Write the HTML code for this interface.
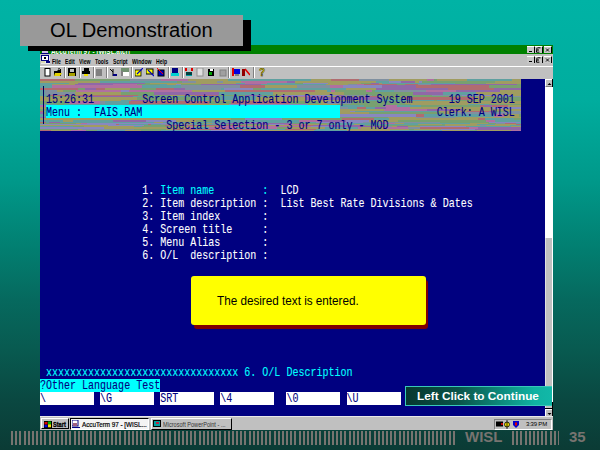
<!DOCTYPE html>
<html><head><meta charset="utf-8">
<style>
*{margin:0;padding:0;box-sizing:border-box}
html,body{width:600px;height:450px;overflow:hidden}
body{position:relative;font-family:"Liberation Sans",sans-serif;
background:linear-gradient(to bottom,#00b3a5 0px,#00ad9e 100px,#00998a 180px,#027e70 250px,#06695e 300px,#085a50 350px,#0a4841 400px,#0b3b35 450px);}
.abs{position:absolute}
.sbtn{width:7px;height:8px;background:#c0c0c0;border-top:1px solid #fff;border-left:1px solid #fff;border-bottom:1px solid #808080}
.tbt{font-size:7px;line-height:10px;color:#000;white-space:nowrap;transform-origin:0 0}

.btn{width:8px;height:7px;background:#c8c8c8;border-top:1px solid #fff;border-right:1px solid #000}
.btn i{position:absolute;background:#000;display:block}
.btn b{position:absolute;left:0;top:-3px;width:7px;font-size:8px;line-height:10px;text-align:center;color:#000}
.menu{top:11.5px;font-size:6.8px;line-height:10px;color:#000;white-space:nowrap;transform:scaleX(0.75);transform-origin:0 0;font-weight:bold}
.sep{position:absolute;top:0;width:2px;height:11px;border-left:1px solid #808080;border-right:1px solid #fff}
.ic{position:absolute;top:1px;width:8px;height:9px}

#tshadow{left:28px;top:20px;width:223px;height:31px;background:#000}
#tbox{left:20px;top:15px;width:223px;height:31px;background:#999999}
#ttext{left:50px;top:18px;font-size:20.15px;color:#000;white-space:nowrap;line-height:24px}
#win{left:40px;top:45px;width:513px;height:385px;background:#c0c0c0;overflow:hidden}
#titlebar{left:0;top:0;width:513px;height:9px;background:#008000}
#term{left:0;top:34px;width:505px;height:337px;background:#000080}
.row{position:absolute;left:0;height:13px;white-space:pre;font-family:"Liberation Mono",monospace;font-size:13.5px;line-height:13px;transform:scaleX(0.7418);-webkit-text-stroke:0.1px currentColor;transform-origin:0 0}
.cy{color:#00ffff}.wh{color:#fff}.nv{color:#000080}
#taskbar{left:0;top:371px;width:513px;height:14px;background:#c0c0c0;border-top:1px solid #e8e8e8}
#bars1{left:10.8px;top:431px;width:444px;height:14px;background:repeating-linear-gradient(to right,#777470 0,#777470 2.1px,transparent 2.1px,transparent 4.1667px)}
#bars2{left:512px;top:431px;width:47px;height:14px;background:repeating-linear-gradient(to right,#777470 0,#777470 2.1px,transparent 2.1px,transparent 4.1667px)}
#wisl{left:465px;top:428px;font-size:15px;font-weight:bold;color:#777470;line-height:18px}
#pgno{left:569px;top:428px;font-size:15px;font-weight:bold;color:#777470;line-height:18px}
#ysh{left:194px;top:280px;width:234px;height:49px;background:#800000;border-radius:3px}
#ybox{left:191px;top:276px;width:235px;height:49px;background:#ffff00;border-radius:3px}
#ytext{left:217px;top:294px;font-size:12px;color:#000;line-height:14px;white-space:nowrap;transform:scaleX(0.975);transform-origin:0 0}
#lcc{left:404.5px;top:385.5px;width:147px;height:20.5px;background:linear-gradient(to right,#06382f 0%,#0a5248 35%,#0d8a7c 65%,#10b2a2 88%,#12b8a8 100%);border:1px solid #38c8b8;border-right:none}
#lcctext{left:417px;top:389px;font-size:11.8px;font-weight:bold;color:#fff;line-height:15px;white-space:nowrap}
</style></head><body>
<div id="win" class="abs">
  <div id="titlebar" class="abs" style="overflow:hidden"><div class="abs" id="ttl" style="left:10.5px;top:1.5px;font-size:8px;font-weight:bold;color:#fff;line-height:10px;white-space:nowrap;transform:scaleX(0.8);transform-origin:0 0">AccuTerm 97 - [WISL.atcf]</div></div>
  
  <div class="abs" style="left:1px;top:7.5px;width:8px;height:1px;background:#000080"></div><div class="abs" style="left:2px;top:6px;width:6px;height:1.5px;background:#d0c0e0"></div>
  <div class="abs btn" style="left:486.5px;top:1px"><i style="left:2px;top:4px;width:3px;height:1px"></i></div>
  <div class="abs btn" style="left:494.5px;top:1px"><svg width="7" height="6" viewBox="0 0 7 6" style="position:absolute;left:0;top:0"><path d="M2.5 0.8 h3 M2 0.8 l-0.6 4.4 h3 M2 3 h2" stroke="#000" stroke-width="1" fill="none"/></svg></div>
  <div class="abs btn" style="left:503.5px;top:1px"><svg width="7" height="6" viewBox="0 0 7 6" style="position:absolute;left:0;top:0"><path d="M2 1.5 l3 3 M5 1.5 l-3 3" stroke="#000" stroke-width="0.9"/></svg></div>
  <svg class="abs" style="left:1px;top:10px" width="9" height="9" viewBox="0 0 9 9"><rect x="0" y="0" width="9" height="9" fill="#e8e8e8"/><rect x="0.5" y="0.5" width="7" height="5" fill="#fff" stroke="#000080" stroke-width="1"/><rect x="3" y="2" width="2" height="2" fill="#000"/><rect x="0" y="6" width="4" height="2" fill="#d8d8b0"/><rect x="5" y="6" width="4" height="2" fill="#000080"/></svg>
  <div class="abs menu" style="left:12px">File</div>
  <div class="abs menu" style="left:25px">Edit</div>
  <div class="abs menu" style="left:39px">View</div>
  <div class="abs menu" style="left:55px">Tools</div>
  <div class="abs menu" style="left:73px">Script</div>
  <div class="abs menu" style="left:92px">Window</div>
  <div class="abs menu" style="left:116px">Help</div>
  <div class="abs btn" style="left:486.5px;top:11px"><i style="left:2px;top:4px;width:3px;height:1px"></i></div>
  <div class="abs btn" style="left:494.5px;top:11px"><svg width="7" height="6" viewBox="0 0 7 6" style="position:absolute;left:0;top:0"><path d="M2.5 0.8 h3 M2 0.8 l-0.6 4.4 h3 M2 3 h2" stroke="#000" stroke-width="1" fill="none"/></svg></div>
  <div class="abs btn" style="left:503.5px;top:11px"><svg width="7" height="6" viewBox="0 0 7 6" style="position:absolute;left:0;top:0"><path d="M2 1.5 l3 3 M5 1.5 l-3 3" stroke="#000" stroke-width="0.9"/></svg></div>
  <div class="abs" style="left:0;top:21px;width:513px;height:1px;background:#fff"></div>
  <div id="tools" class="abs" style="left:0;top:22px;width:513px;height:11px"><div class="sep" style="left:24.0px"></div><div class="sep" style="left:38.5px"></div><div class="sep" style="left:52.5px"></div><div class="sep" style="left:65.5px"></div><div class="sep" style="left:91.0px"></div><div class="sep" style="left:128.0px"></div><div class="sep" style="left:141.5px"></div><div class="sep" style="left:188.0px"></div><div class="sep" style="left:213.0px"></div><svg class="ic" style="left:3.5px" width="8" height="9" viewBox="0 0 8 9"><rect x="1" y="0.5" width="5" height="7.5" fill="#fff" stroke="#000" stroke-width="1"/></svg><svg class="ic" style="left:14.0px" width="8" height="9" viewBox="0 0 8 9"><path d="M0 3 h3 l1 -1 h3 v6 h-7z" fill="#000"/><path d="M1 5 h7 l-2 3 h-6z" fill="#e0d000"/><path d="M4 1 q2 -1 3 1" stroke="#000" fill="none"/></svg><svg class="ic" style="left:27.5px" width="8" height="9" viewBox="0 0 8 9"><rect x="0" y="0" width="8" height="8" fill="#000"/><rect x="2" y="1" width="4" height="3" fill="#c0c0c0"/><rect x="1" y="5" width="6" height="3" fill="#a8a000"/></svg><svg class="ic" style="left:42.0px" width="8" height="9" viewBox="0 0 8 9"><rect x="2" y="0" width="5" height="3" fill="#000"/><rect x="0" y="3" width="8" height="3" fill="#000"/><rect x="2" y="6" width="4" height="2" fill="#f0e000"/></svg><svg class="ic" style="left:55.0px" width="8" height="9" viewBox="0 0 8 9"><rect x="1" y="1" width="6" height="7" fill="#808080"/></svg><svg class="ic" style="left:70.0px" width="8" height="9" viewBox="0 0 8 9"><path d="M0 1 l3 3 M3 1 l0 7" stroke="#000"/><rect x="3" y="6" width="4" height="2" fill="#000080"/></svg><svg class="ic" style="left:81.0px" width="8" height="9" viewBox="0 0 8 9"><rect x="0" y="0" width="8" height="4" fill="#709070"/><rect x="2" y="4" width="6" height="4" fill="#fff"/><rect x="0" y="3" width="2" height="5" fill="#808080"/></svg><svg class="ic" style="left:95.0px" width="8" height="9" viewBox="0 0 8 9"><rect x="0" y="2" width="6" height="6" fill="#ffff00" stroke="#000" stroke-width="0.8"/><path d="M2 6 L8 0" stroke="#0000c0" stroke-width="1.2"/></svg><svg class="ic" style="left:106.0px" width="8" height="9" viewBox="0 0 8 9"><rect x="0" y="1" width="7" height="5" fill="#ffff00" stroke="#000" stroke-width="1"/><path d="M2 2 L8 8" stroke="#0000c0" stroke-width="1.2"/></svg><svg class="ic" style="left:117.0px" width="8" height="9" viewBox="0 0 8 9"><rect x="1" y="2" width="6" height="6" fill="#0000c0" stroke="#000"/><path d="M0 0 L6 6" stroke="#f00" stroke-width="1"/></svg><svg class="ic" style="left:131.0px" width="8" height="9" viewBox="0 0 8 9"><rect x="1" y="0" width="6" height="5" fill="#000080"/><rect x="0" y="5" width="8" height="3" fill="#00d0d0"/></svg><svg class="ic" style="left:145.0px" width="8" height="9" viewBox="0 0 8 9"><rect x="0" y="0" width="2" height="3" fill="#e00000"/><rect x="6" y="0" width="2" height="3" fill="#e00000"/><rect x="1" y="4" width="6" height="3" fill="#004040"/><rect x="1" y="7" width="6" height="1" fill="#00a0a0"/></svg><svg class="ic" style="left:156.0px" width="8" height="9" viewBox="0 0 8 9"><rect x="1" y="0" width="6" height="8" fill="#e0e0e0" stroke="#909090"/></svg><svg class="ic" style="left:167.0px" width="8" height="9" viewBox="0 0 8 9"><rect x="1" y="1" width="6" height="7" fill="#000"/><rect x="2" y="4" width="3" height="3" fill="#00a000"/><rect x="3" y="1" width="3" height="2" fill="#fff"/></svg><svg class="ic" style="left:179.0px" width="8" height="9" viewBox="0 0 8 9"><rect x="1" y="2" width="6" height="6" fill="#a0a0a0" stroke="#808080"/></svg><svg class="ic" style="left:192.0px" width="8" height="9" viewBox="0 0 8 9"><rect x="0" y="0" width="2" height="8" fill="#e00000"/><rect x="2" y="1" width="6" height="5" fill="#0000e0"/><rect x="3" y="6" width="4" height="2" fill="#808080"/></svg><svg class="ic" style="left:202.0px" width="8" height="9" viewBox="0 0 8 9"><rect x="0" y="1" width="3" height="7" fill="#900000"/><path d="M3 1 L8 7" stroke="#e00000" stroke-width="1.5"/></svg><svg class="ic" style="left:218.0px" width="8" height="9" viewBox="0 0 8 9"><text x="1" y="8" font-size="10" font-weight="bold" fill="#e8d800" stroke="#000" stroke-width="0.4" font-family="Liberation Sans">?</text></svg></div>
  <div id="term" class="abs"></div>
  <svg id="noise" class="abs" width="481" height="52" viewBox="0 0 481 52" shape-rendering="crispEdges" style="left:0;top:34px"><path fill="#b06c70" d="M0 0h35v2h-35zM291 0h28v2h-28zM324 5h33v1h-33zM365 5h13v1h-13zM200 6h16v3h-16zM216 6h9v3h-9zM376 6h32v3h-32zM408 6h41v3h-41zM0 9h38v2h-38zM56 9h9v2h-9zM116 9h18v2h-18zM408 9h46v2h-46zM185 11h90v2h-90zM8 16h90v1h-90zM155 16h23v1h-23zM102 17h5v1h-5zM327 17h12v1h-12zM364 18h71v3h-71zM89 22h80v3h-80zM191 22h59v3h-59zM440 26h4v2h-4zM452 26h16v2h-16zM317 28h9v2h-9zM41 30h62v2h-62zM258 30h6v2h-6zM0 32h4v1h-4zM427 32h22v1h-22zM41 33h8v2h-8zM49 33h86v2h-86zM376 35h8v3h-8zM302 39h12v2h-12zM314 39h20v2h-20zM438 39h7v2h-7zM0 43h6v1h-6zM465 44h11v1h-11zM76 45h3v1h-3zM108 45h3v1h-3zM476 45h5v1h-5zM125 46h68v1h-68zM193 46h12v1h-12zM261 46h12v1h-12zM380 48h49v2h-49zM134 50h72v1h-72zM206 50h11v1h-11zM245 50h31v1h-31zM0 51h11v1h-11z"/><path fill="#78a070" d="M35 0h43v2h-43zM78 0h12v2h-12zM394 0h3v2h-3zM137 2h5v2h-5zM382 2h73v2h-73zM105 4h5v1h-5zM255 4h8v1h-8zM321 4h10v1h-10zM415 4h31v1h-31zM97 5h23v1h-23zM141 5h4v1h-4zM145 5h16v1h-16zM357 5h8v1h-8zM477 5h4v1h-4zM449 6h32v3h-32zM38 9h7v2h-7zM90 9h10v2h-10zM100 9h16v2h-16zM213 9h8v2h-8zM23 11h4v2h-4zM27 11h9v2h-9zM295 11h10v2h-10zM305 11h21v2h-21zM332 11h3v2h-3zM81 13h33v3h-33zM304 13h69v3h-69zM98 16h32v1h-32zM178 16h27v1h-27zM222 16h19v1h-19zM332 16h60v1h-60zM3 17h37v1h-37zM370 17h15v1h-15zM385 17h14v1h-14zM399 17h5v1h-5zM404 17h34v1h-34zM97 18h82v3h-82zM342 18h22v3h-22zM445 18h36v3h-36zM394 21h3v1h-3zM420 21h33v1h-33zM453 21h28v1h-28zM0 22h18v3h-18zM18 22h11v3h-11zM169 22h22v3h-22zM250 22h23v3h-23zM273 22h8v3h-8zM311 22h3v3h-3zM314 22h51v3h-51zM17 25h7v1h-7zM297 25h70v1h-70zM367 25h4v1h-4zM449 25h32v1h-32zM70 26h4v2h-4zM92 26h31v2h-31zM324 26h21v2h-21zM381 26h59v2h-59zM124 28h10v2h-10zM0 30h32v2h-32zM124 30h75v2h-75zM453 32h17v1h-17zM3 33h10v2h-10zM216 33h33v2h-33zM264 33h26v2h-26zM329 33h75v2h-75zM66 35h53v3h-53zM119 35h4v3h-4zM479 35h2v3h-2zM104 38h9v1h-9zM179 38h22v1h-22zM295 38h53v1h-53zM191 39h14v2h-14zM242 39h60v2h-60zM474 39h7v2h-7zM156 41h16v2h-16zM358 41h72v2h-72zM430 41h16v2h-16zM400 43h40v1h-40zM440 43h9v1h-9zM0 44h36v1h-36zM156 44h8v1h-8zM252 44h38v1h-38zM290 44h6v1h-6zM448 44h8v1h-8zM186 45h34v1h-34zM402 45h3v1h-3zM104 46h21v1h-21zM325 46h80v1h-80zM33 47h11v1h-11zM102 47h43v1h-43zM237 48h3v2h-3zM240 48h12v2h-12zM0 50h38v1h-38zM94 50h32v1h-32zM369 50h5v1h-5zM46 51h11v1h-11zM101 51h20v1h-20zM430 51h7v1h-7z"/><path fill="#8090a0" d="M90 0h31v2h-31zM319 0h30v2h-30zM142 2h14v2h-14zM177 2h6v2h-6zM308 5h9v1h-9zM378 5h13v1h-13zM141 6h59v3h-59zM257 6h33v3h-33zM145 9h36v2h-36zM5 11h12v2h-12zM354 11h32v2h-32zM5 13h30v3h-30zM304 16h28v1h-28zM392 16h3v1h-3zM395 16h21v1h-21zM416 16h6v1h-6zM458 17h23v1h-23zM139 21h15v1h-15zM60 22h5v3h-5zM287 22h24v3h-24zM295 28h13v2h-13zM470 32h10v1h-10zM13 33h28v2h-28zM140 33h76v2h-76zM411 33h70v2h-70zM113 38h43v1h-43zM376 38h39v1h-39zM323 43h77v1h-77zM172 44h10v1h-10zM456 44h9v1h-9zM121 45h32v1h-32zM440 46h6v1h-6zM346 47h6v1h-6zM368 48h12v2h-12zM42 50h52v1h-52z"/><path fill="#b070a0" d="M121 0h27v2h-27zM387 0h7v2h-7zM201 2h46v2h-46zM205 4h22v1h-22zM73 5h24v1h-24zM317 5h7v1h-7zM12 6h90v3h-90zM290 6h13v3h-13zM36 11h45v2h-45zM89 11h63v2h-63zM291 11h4v2h-4zM326 11h6v2h-6zM386 11h30v2h-30zM235 17h51v1h-51zM29 22h31v3h-31zM0 26h70v2h-70zM345 26h12v2h-12zM228 28h34v2h-34zM346 28h24v2h-24zM344 30h15v2h-15zM359 30h28v2h-28zM102 32h8v1h-8zM454 35h10v3h-10zM259 41h19v2h-19zM446 41h9v2h-9zM41 44h6v1h-6zM339 44h16v1h-16zM244 45h24v1h-24zM180 47h46v1h-46zM226 47h45v1h-45zM147 48h7v2h-7zM169 48h27v2h-27zM215 48h22v2h-22zM318 48h3v2h-3zM344 48h24v2h-24zM429 48h9v2h-9zM31 51h6v1h-6zM37 51h9v1h-9zM471 51h10v1h-10z"/><path fill="#a09c60" d="M148 0h40v2h-40zM271 0h20v2h-20zM349 0h6v2h-6zM355 0h32v2h-32zM397 0h30v2h-30zM472 0h9v2h-9zM0 2h51v2h-51zM51 2h9v2h-9zM156 2h12v2h-12zM168 2h9v2h-9zM183 2h18v2h-18zM255 2h81v2h-81zM375 2h4v2h-4zM455 2h26v2h-26zM29 4h9v1h-9zM110 4h86v1h-86zM288 4h33v1h-33zM339 4h3v1h-3zM446 4h35v1h-35zM12 5h23v1h-23zM127 5h9v1h-9zM286 5h22v1h-22zM225 6h32v3h-32zM65 9h25v2h-25zM306 9h30v2h-30zM17 11h6v2h-6zM152 11h33v2h-33zM275 11h12v2h-12zM460 11h21v2h-21zM35 13h46v3h-46zM233 13h71v3h-71zM436 13h45v3h-45zM130 16h25v1h-25zM473 16h8v1h-8zM0 17h3v1h-3zM286 17h25v1h-25zM311 17h16v1h-16zM339 17h31v1h-31zM438 17h20v1h-20zM0 18h67v3h-67zM67 18h30v3h-30zM216 18h31v3h-31zM247 18h19v3h-19zM435 18h10v3h-10zM0 21h69v1h-69zM69 21h12v1h-12zM120 21h16v1h-16zM172 21h62v1h-62zM234 21h88v1h-88zM281 22h6v3h-6zM365 22h35v3h-35zM400 22h53v3h-53zM453 22h28v3h-28zM146 25h4v1h-4zM150 25h21v1h-21zM171 25h18v1h-18zM268 25h29v1h-29zM371 25h57v1h-57zM123 26h38v2h-38zM245 26h4v2h-4zM468 26h13v2h-13zM0 28h45v2h-45zM166 28h62v2h-62zM262 28h8v2h-8zM270 28h25v2h-25zM370 28h83v2h-83zM103 30h21v2h-21zM199 30h59v2h-59zM264 30h80v2h-80zM422 30h59v2h-59zM26 32h7v1h-7zM33 32h22v1h-22zM207 32h73v1h-73zM280 32h30v1h-30zM398 32h29v1h-29zM249 33h15v2h-15zM290 33h39v2h-39zM404 33h7v2h-7zM216 35h82v3h-82zM464 35h15v3h-15zM229 38h11v1h-11zM240 38h55v1h-55zM348 38h28v1h-28zM415 38h50v1h-50zM465 38h16v1h-16zM0 39h86v2h-86zM86 39h20v2h-20zM106 39h85v2h-85zM349 39h8v2h-8zM357 39h81v2h-81zM23 41h10v2h-10zM136 41h20v2h-20zM329 41h29v2h-29zM114 43h9v1h-9zM36 44h5v1h-5zM143 44h9v1h-9zM164 44h8v1h-8zM355 44h9v1h-9zM430 44h11v1h-11zM441 44h7v1h-7zM268 45h19v1h-19zM314 45h6v1h-6zM378 45h5v1h-5zM383 45h19v1h-19zM405 45h4v1h-4zM409 45h28v1h-28zM455 45h21v1h-21zM0 46h68v1h-68zM205 46h56v1h-56zM405 46h35v1h-35zM446 46h24v1h-24zM44 47h7v1h-7zM51 47h11v1h-11zM62 47h27v1h-27zM89 47h5v1h-5zM145 47h35v1h-35zM352 47h5v1h-5zM368 47h12v1h-12zM471 47h10v1h-10zM64 48h83v2h-83zM252 48h33v2h-33zM321 48h23v2h-23zM38 50h4v1h-4zM126 50h8v1h-8zM295 50h41v1h-41zM336 50h33v1h-33zM374 50h27v1h-27zM11 51h20v1h-20zM85 51h9v1h-9zM94 51h7v1h-7zM202 51h72v1h-72zM307 51h32v1h-32zM339 51h11v1h-11zM402 51h28v1h-28zM437 51h34v1h-34z"/><path fill="#60a0a0" d="M188 0h11v2h-11zM199 0h27v2h-27zM226 0h45v2h-45zM427 0h45v2h-45zM60 2h77v2h-77zM336 2h13v2h-13zM0 4h23v1h-23zM23 4h6v1h-6zM196 4h9v1h-9zM227 4h28v1h-28zM342 4h73v1h-73zM0 5h12v1h-12zM120 5h7v1h-7zM221 5h10v1h-10zM231 5h55v1h-55zM0 6h12v3h-12zM102 6h33v3h-33zM135 6h6v3h-6zM181 9h3v2h-3zM221 9h85v2h-85zM0 11h5v2h-5zM287 11h4v2h-4zM335 11h19v2h-19zM0 13h5v3h-5zM179 13h54v3h-54zM403 13h33v3h-33zM0 16h8v1h-8zM93 17h9v1h-9zM107 17h84v1h-84zM191 17h44v1h-44zM179 18h7v3h-7zM186 18h30v3h-30zM81 21h10v1h-10zM109 21h11v1h-11zM154 21h18v1h-18zM322 21h72v1h-72zM397 21h23v1h-23zM65 22h10v3h-10zM75 22h14v3h-14zM0 25h12v1h-12zM12 25h5v1h-5zM24 25h89v1h-89zM113 25h33v1h-33zM428 25h21v1h-21zM161 26h5v2h-5zM249 26h4v2h-4zM253 26h37v2h-37zM290 26h34v2h-34zM357 26h24v2h-24zM45 28h6v2h-6zM51 28h73v2h-73zM138 28h28v2h-28zM308 28h9v2h-9zM326 28h9v2h-9zM4 32h22v1h-22zM55 32h8v1h-8zM63 32h22v1h-22zM85 32h10v1h-10zM95 32h7v1h-7zM110 32h88v1h-88zM315 32h43v1h-43zM358 32h29v1h-29zM387 32h11v1h-11zM0 35h6v3h-6zM138 35h12v3h-12zM150 35h66v3h-66zM384 35h70v3h-70zM91 38h13v1h-13zM156 38h23v1h-23zM201 38h28v1h-28zM334 39h15v2h-15zM445 39h29v2h-29zM0 41h23v2h-23zM33 41h9v2h-9zM42 41h31v2h-31zM172 41h80v2h-80zM252 41h7v2h-7zM455 41h16v2h-16zM471 41h10v2h-10zM6 43h3v1h-3zM20 43h34v1h-34zM54 43h60v1h-60zM123 43h82v1h-82zM226 43h50v1h-50zM480 43h1v1h-1zM127 44h16v1h-16zM152 44h4v1h-4zM296 44h33v1h-33zM329 44h10v1h-10zM364 44h66v1h-66zM476 44h5v1h-5zM79 45h29v1h-29zM111 45h10v1h-10zM153 45h33v1h-33zM287 45h27v1h-27zM320 45h58v1h-58zM437 45h18v1h-18zM470 46h11v1h-11zM0 47h33v1h-33zM94 47h8v1h-8zM426 47h35v1h-35zM461 47h10v1h-10zM154 48h15v2h-15zM196 48h19v2h-19zM285 48h29v2h-29zM314 48h4v2h-4zM217 50h28v1h-28zM276 50h7v1h-7zM283 50h12v1h-12zM57 51h7v1h-7zM64 51h21v1h-21zM121 51h32v1h-32zM153 51h18v1h-18zM274 51h3v1h-3zM277 51h30v1h-30zM350 51h52v1h-52z"/><path fill="#9068a8" d="M247 2h8v2h-8zM361 2h14v2h-14zM38 4h67v1h-67zM331 4h8v1h-8zM35 5h38v1h-38zM161 5h60v1h-60zM391 5h86v1h-86zM342 6h34v3h-34zM45 9h11v2h-11zM134 9h11v2h-11zM336 9h72v2h-72zM454 9h27v2h-27zM416 11h44v2h-44zM114 13h65v3h-65zM373 13h30v3h-30zM205 16h17v1h-17zM297 16h7v1h-7zM40 17h53v1h-53zM266 18h76v3h-76zM91 21h11v1h-11zM102 21h7v1h-7zM74 26h18v2h-18zM444 26h8v2h-8zM134 28h4v2h-4zM335 28h11v2h-11zM32 30h9v2h-9zM387 30h35v2h-35zM449 32h4v1h-4zM0 33h3v2h-3zM135 33h5v2h-5zM0 38h19v1h-19zM19 38h9v1h-9zM73 41h33v2h-33zM278 41h28v2h-28zM9 43h11v1h-11zM182 44h70v1h-70zM220 45h9v1h-9zM273 46h52v1h-52zM291 47h55v1h-55zM357 47h11v1h-11zM438 48h43v2h-43zM435 50h46v1h-46z"/><path fill="#8888c0" d="M349 2h12v2h-12zM379 2h3v2h-3zM263 4h25v1h-25zM136 5h5v1h-5zM303 6h39v3h-39zM184 9h29v2h-29zM81 11h8v2h-8zM241 16h56v1h-56zM422 16h51v1h-51zM136 21h3v1h-3zM189 25h79v1h-79zM166 26h79v2h-79zM453 28h28v2h-28zM198 32h9v1h-9zM310 32h5v1h-5zM480 32h1v1h-1zM6 35h60v3h-60zM123 35h15v3h-15zM298 35h78v3h-78zM28 38h63v1h-63zM205 39h37v2h-37zM106 41h30v2h-30zM306 41h23v2h-23zM205 43h21v1h-21zM276 43h42v1h-42zM318 43h5v1h-5zM449 43h31v1h-31zM47 44h80v1h-80zM0 45h76v1h-76zM229 45h15v1h-15zM68 46h27v1h-27zM95 46h9v1h-9zM271 47h20v1h-20zM380 47h46v1h-46zM0 48h64v2h-64zM401 50h34v1h-34zM171 51h31v1h-31z"/></svg>
  <!-- scrollbar -->
  <div class="abs" style="left:505px;top:34px;width:8px;height:337px;background:#fff"></div>
  <div class="abs" style="left:505px;top:193px;width:7px;height:170px;background:#c0c0c0;border-left:1px solid #e0e0e0"></div>
  <div class="abs" style="left:512px;top:34px;width:1px;height:8px;background:#000"></div><div class="abs" style="left:512px;top:357px;width:1px;height:14px;background:#000"></div>
  <div class="abs sbtn" style="left:505px;top:34px"><svg width="7" height="8" viewBox="0 0 7 8" style="position:absolute;left:0;top:0"><path d="M1.5 5 L3.5 3 L5.5 5z" fill="#000"/></svg></div>
  <div class="abs" style="left:505px;top:363px;width:7px;height:1px;background:#000"></div>
  <div class="abs sbtn" style="left:505px;top:364px"><svg width="7" height="8" viewBox="0 0 7 8" style="position:absolute;left:0;top:0"><path d="M1.5 3 L3.5 5 L5.5 3z" fill="#000"/></svg></div>
  <div class="abs" style="left:3px;top:41px;width:1px;height:38px;background:#000060"></div>
  <div id="taskbar" class="abs">
    <div class="abs" style="left:0.5px;top:1px;width:28px;height:11px;background:#c0c0c0;border-top:1px solid #fff;border-left:1px solid #fff;border-right:1px solid #000;border-bottom:1px solid #000"></div>
    <svg class="abs" style="left:4px;top:4px" width="8" height="7" viewBox="0 0 8 7"><rect x="0" y="0" width="8" height="7" fill="#000"/><rect x="0.5" y="1" width="3" height="2.5" fill="#e00000"/><rect x="4" y="0.5" width="3" height="2.5" fill="#00b000"/><rect x="0.5" y="3.8" width="3" height="2.5" fill="#0000e0"/><rect x="4" y="3.3" width="3" height="3" fill="#f0e000"/></svg>
    <div class="abs tbt" style="left:13px;top:2.5px;font-weight:bold;transform:scaleX(0.8);-webkit-text-stroke:0.3px #000">Start</div>
    <div class="abs" style="left:30px;top:1px;width:79px;height:12px;background:#f4f4f4;border-top:1px solid #000;border-left:1px solid #000;border-right:1px solid #fff;border-bottom:1px solid #fff"></div>
    <svg class="abs" style="left:32px;top:3px" width="8" height="8" viewBox="0 0 8 8"><rect x="0" y="0" width="6" height="6" fill="#fff" stroke="#000080"/><rect x="1" y="3" width="4" height="3" fill="#a06080"/><rect x="0" y="7" width="8" height="1" fill="#000080"/></svg>
    <div class="abs tbt" style="left:42px;top:2.5px;transform:scaleX(0.9);-webkit-text-stroke:0.2px #000">AccuTerm 97 - [WISL...</div>
    <div class="abs" style="left:111px;top:1px;width:81px;height:12px;background:#c0c0c0;border-top:1px solid #fff;border-left:1px solid #fff;border-right:1px solid #000;border-bottom:1px solid #000"></div>
    <svg class="abs" style="left:113px;top:3px" width="8" height="7" viewBox="0 0 8 7"><rect x="0" y="0" width="8" height="7" fill="#000"/><rect x="1" y="1" width="6" height="5" fill="#00a0a0"/><rect x="3" y="2" width="3" height="2" fill="#c02040"/></svg>
    <div class="abs tbt" style="left:123px;top:2.5px;color:#333;transform:scaleX(0.8)">Microsoft PowerPoint - ...</div>
    <div class="abs" style="left:454px;top:1.5px;width:58px;height:11.5px;border-top:1px solid #808080;border-left:1px solid #808080;border-right:1px solid #fff;border-bottom:1px solid #fff"></div>
    <svg class="abs" style="left:456px;top:3px" width="26" height="9" viewBox="0 0 26 9"><rect x="0" y="1.5" width="7" height="5" fill="#000"/><rect x="5" y="3" width="2" height="2" fill="#c00000"/><circle cx="11" cy="4.5" r="2.5" fill="#f0e000" stroke="#000" stroke-width="0.8"/><path d="M11 0 v9" stroke="#000" stroke-width="0.8"/><path d="M17 1 h6 v4 l-3 3 l-3 -3z" fill="#0000d0"/><rect x="19" y="2.5" width="2" height="3" fill="#e00000"/></svg>
    <div class="abs tbt" style="left:486px;top:2px;font-size:6px;letter-spacing:-0.2px">3:39 PM</div>
  </div>
</div>
<div id="tshadow" class="abs"></div>
<div id="tbox" class="abs"></div>
<div id="ttext" class="abs">OL Demonstration</div>

<!-- terminal rows: left 40, top 79 + 13.05*r -->
<div class="abs" style="left:40px;top:79px;width:481px;height:326px">
  <div class="abs" style="left:6.01px;top:26.10px;width:294.49px;height:13.05px;background:#00ffff"></div>
  <div class="abs" style="left:0.00px;top:300.15px;width:120.20px;height:13.05px;background:#00ffff"></div>
  <div class="abs" style="left:0.00px;top:313.20px;width:54.09px;height:13.05px;background:#fff"></div>
  <div class="abs" style="left:60.10px;top:313.20px;width:54.09px;height:13.05px;background:#fff"></div>
  <div class="abs" style="left:120.20px;top:313.20px;width:54.09px;height:13.05px;background:#fff"></div>
  <div class="abs" style="left:180.30px;top:313.20px;width:54.09px;height:13.05px;background:#fff"></div>
  <div class="abs" style="left:246.41px;top:313.20px;width:54.09px;height:13.05px;background:#fff"></div>
  <div class="abs" style="left:306.51px;top:313.20px;width:54.09px;height:13.05px;background:#fff"></div>
  <div class="row nv" style="top:14.30px"> 15:26:31        Screen Control Application Development System      19 SEP 2001</div>
  <div class="row nv" style="top:27.30px"> Menu :  FAIS.RAM                                                 Clerk: A WISL</div>
  <div class="row nv" style="top:40.30px">                     Special Selection - 3 or 7 only - MOD</div>
  <div class="row wh" style="top:105.30px">                 1. <span class="cy">Item name        :</span>  LCD</div>
  <div class="row wh" style="top:118.30px">                 2. Item description :  List Best Rate Divisions &amp; Dates</div>
  <div class="row wh" style="top:131.30px">                 3. Item index       :</div>
  <div class="row wh" style="top:144.30px">                 4. Screen title     :</div>
  <div class="row wh" style="top:157.30px">                 5. Menu Alias       :</div>
  <div class="row wh" style="top:170.30px">                 6. O/L  description :</div>
  <div class="row cy" style="top:287.30px"> xxxxxxxxxxxxxxxxxxxxxxxxxxxxxxxx 6. O/L Description</div>
  <div class="row nv" style="top:300.30px">?Other Language Test</div>
  <div class="row nv" style="top:313.30px">\         \G        SRT       \4         \0        \U</div>
</div>

<div id="ysh" class="abs"></div>
<div id="ybox" class="abs"></div>
<div id="ytext" class="abs">The desired text is entered.</div>
<div id="lcc" class="abs"></div>
<div id="lcctext" class="abs">Left Click to Continue</div>

<div id="bars1" class="abs"></div>
<div id="bars2" class="abs"></div>
<div id="wisl" class="abs">WISL</div>
<div id="pgno" class="abs">35</div>
</body></html>
